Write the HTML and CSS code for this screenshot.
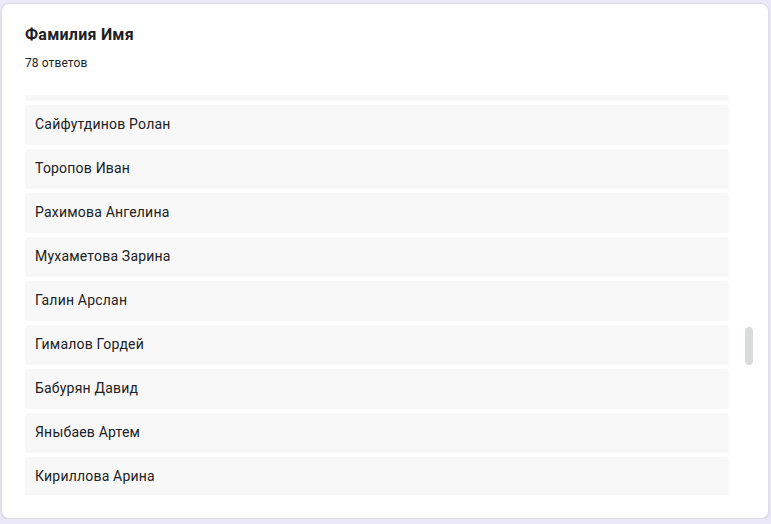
FILE: index.html
```html
<!DOCTYPE html>
<html lang="ru">
<head>
<meta charset="UTF-8" />
<meta name="viewport" content="width=device-width, initial-scale=1" />
<title>Фамилия Имя</title>
<link rel="stylesheet" href="styles.css">
</head>
<body>

<div class="answer-card">
  <h2 class="question-title">Фамилия Имя</h2>
  <div class="answer-count">78 ответов</div>

  <div class="answer-scroll">
    <div class="answer-viewport">
      <ul class="answer-list">
        <li>Шарипов Тимур</li>
        <li>Сайфутдинов Ролан</li>
        <li>Торопов Иван</li>
        <li>Рахимова Ангелина</li>
        <li>Мухаметова Зарина</li>
        <li>Галин Арслан</li>
        <li>Гималов Гордей</li>
        <li>Бабурян Давид</li>
        <li>Яныбаев Артем</li>
        <li>Кириллова Арина</li>
      </ul>
    </div>
    <div class="scroll-track">
      <div class="scroll-thumb"></div>
    </div>
  </div>
</div>

</body>
</html>
```

FILE: styles.css
```css
body {
  margin: 0;
  padding: 3px 2px 0 1px;
  background: #ebe8f7;
  font-family: Roboto, "Noto Sans", Arial, sans-serif;
  color: #202124;
}
.answer-card {
  box-sizing: border-box;
  width: 768px;
  height: 516px;
  background: #fff;
  border: 1px solid #dedde6;
  border-radius: 8px;
  box-shadow: 0 1px 2px rgba(60, 64, 67, 0.12);
  padding: 19px 15px 23px 23px;
  display: flex;
  flex-direction: column;
}
.question-title {
  margin: 0;
  font-size: 16px;
  line-height: 24px;
  font-weight: 700;
  letter-spacing: 0.25px;
}
.answer-count {
  margin-top: 8px;
  font-size: 12px;
  line-height: 16px;
  letter-spacing: 0.1px;
}
.answer-scroll {
  margin-top: 24px;
  display: flex;
  height: 400px;
}
.answer-viewport {
  flex: 1;
  overflow: hidden;
}
.answer-list {
  list-style: none;
  margin: -34px 0 0;
  padding: 0;
}
.answer-list li {
  height: 40px;
  margin-bottom: 4px;
  padding: 0 10px 2px;
  box-sizing: border-box;
  background: #f8f8f8;
  border-radius: 4px;
  font-size: 14px;
  line-height: 38px;
  letter-spacing: 0.2px;
}
.scroll-track {
  width: 8px;
  margin-left: 16px;
}
.scroll-thumb {
  margin-top: 232px;
  height: 38px;
  background: #dadcdb;
  border-radius: 4px;
}
```
